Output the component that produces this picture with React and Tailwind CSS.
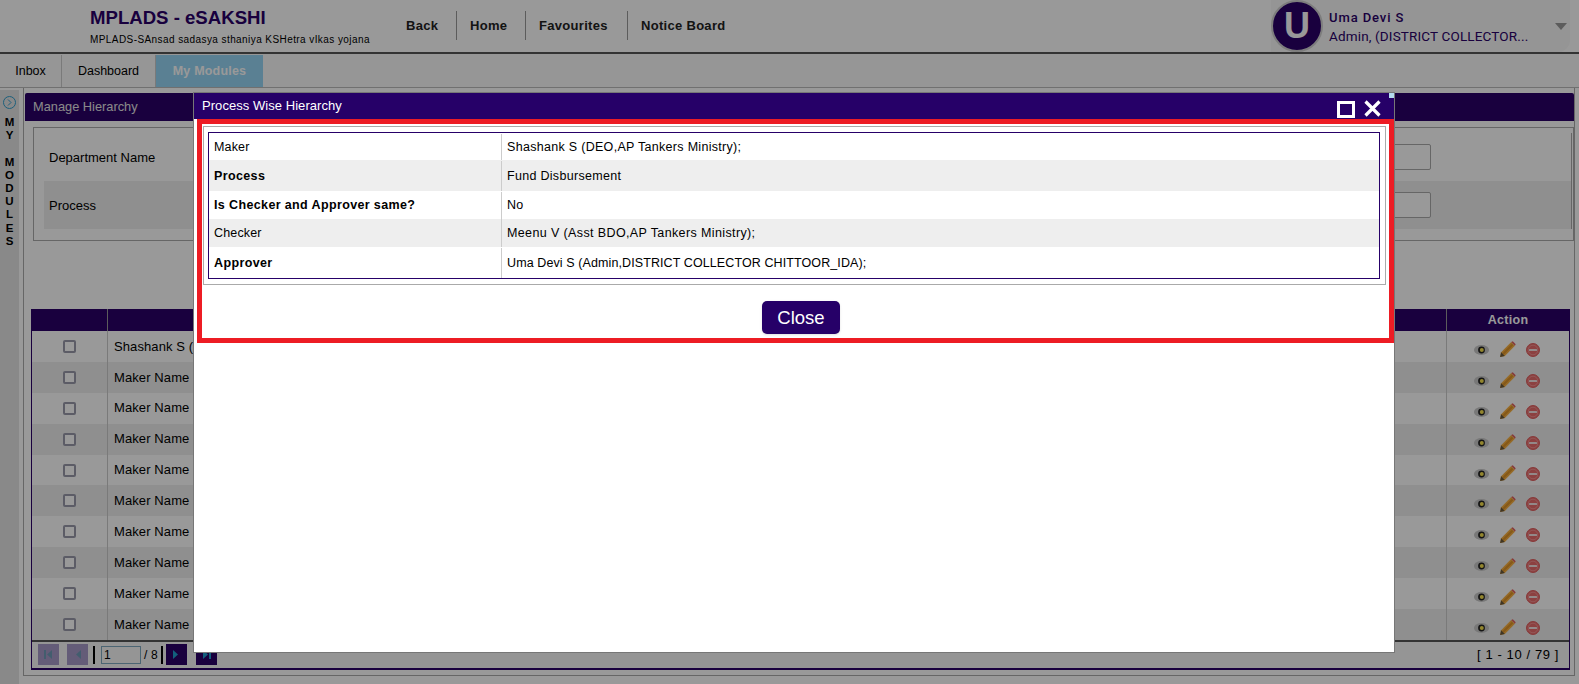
const sans = { fontFamily: '"Liberation Sans", Arial, sans-serif' };

const hierarchy = [
  { label: 'Maker', value: 'Shashank S (DEO,AP Tankers Ministry);', h: 'h-[27px] pt-[1px]', bg: 'bg-white', bold: false, track: 'tracking-[0.3px]' },
  { label: 'Process', value: 'Fund Disbursement', h: 'h-[31px] pt-[1px]', bg: 'bg-[#eeeeee]', bold: true, track: 'tracking-[0.3px]' },
  { label: 'Is Checker and Approver same?', value: 'No', h: 'h-[28px] pt-[1px]', bg: 'bg-white', bold: true, track: 'tracking-[0.3px]' },
  { label: 'Checker', value: 'Meenu V (Asst BDO,AP Tankers Ministry);', h: 'h-[28px]', bg: 'bg-[#eeeeee]', bold: false, track: 'tracking-[0.38px]' },
  { label: 'Approver', value: 'Uma Devi S (Admin,DISTRICT COLLECTOR CHITTOOR_IDA);', h: 'h-[31px] pt-[1px]', bg: 'bg-white', bold: true, track: 'tracking-[0.1px]' },
];

const makers = ['Shashank S (', 'Maker Name', 'Maker Name', 'Maker Name', 'Maker Name', 'Maker Name', 'Maker Name', 'Maker Name', 'Maker Name', 'Maker Name'];

function EyeIcon() {
  return (
    <svg width="15" height="12" viewBox="0 0 15 12">
      <ellipse cx="7.500" cy="6" rx="7.500" ry="5" fill="#c8c8c8" />
      <circle cx="7.500" cy="6" r="3.400" fill="#222" />
      <circle cx="7.800" cy="6" r="2" fill="#f5df4d" />
    </svg>
  );
}

function PencilIcon() {
  return (
    <svg width="17" height="17" viewBox="0 0 16 16">
      <path d="M1 15l1-4.500L11.500 1 15 4.500 5.500 14z" fill="#f8b040" />
      <path d="M3 11.500L12 2.500l1.500 1.500-9 9z" fill="#e09428" />
      <path d="M1 15l1-4.500 3.500 3.500z" fill="#6b5a3d" />
      <path d="M11.500 1L13 .3 15.700 3 15 4.500z" fill="#e06060" />
    </svg>
  );
}

function MinusIcon() {
  return (
    <svg width="14" height="14" viewBox="0 0 14 14">
      <circle cx="7" cy="7" r="6.500" fill="#ea6c6c" stroke="#e06060" />
      <circle cx="7" cy="7" r="4.800" fill="none" stroke="#f8a0a0" strokeWidth="0.700" />
      <rect x="3" y="5.900" width="8" height="2.200" rx="0.500" fill="#f5e5e5" />
    </svg>
  );
}

function PagerBtn({ dim, dir, bar }) {
  return (
    <div className={`w-[21px] h-[21px] flex items-center justify-center ${dim ? 'bg-[#a799c8]' : 'bg-[#2a0068]'}`}>
      <svg width="9" height="11" viewBox="0 0 9 11">
        {bar && dir === 'left' && <rect x="0" y="1" width="2" height="9" fill={dim ? '#6f9cb8' : '#1f9fd0'} />}
        {dir === 'left' ? (
          <path d="M8 1v9L3 5.500z" fill={dim ? '#6f9cb8' : '#1f9fd0'} />
        ) : (
          <path d="M1 1v9l5-4.500z" fill="#1f9fd0" />
        )}
        {bar && dir === 'right' && <rect x="7" y="1" width="2" height="9" fill="#1f9fd0" />}
      </svg>
    </div>
  );
}

function Page() {
  return (
    <div className="h-[684px] w-[1579px] flex flex-col bg-white overflow-hidden" style={sans}>
      {/* top header */}
      <header className="h-[54px] shrink-0 flex border-b-2 border-[#555] bg-white">
        <div className="ml-[90px] w-[316px] pt-[7px]">
          <div className="text-[18.600px] leading-[22px] font-bold text-[#2a0068]">MPLADS - eSAKSHI</div>
          <div className="text-[10px] leading-[12px] mt-[5px] tracking-[0.42px] text-black whitespace-nowrap">MPLADS-SAnsad sadasya sthaniya KSHetra vIkas yojana</div>
        </div>
        <nav className="mt-[11px] h-[29px] flex text-[13px] font-bold text-[#222] tracking-[0.3px]">
          <div className="w-[51px] flex items-center border-r border-[#999]">Back</div>
          <div className="w-[69px] pl-[13px] flex items-center border-r border-[#999]">Home</div>
          <div className="w-[102px] pl-[13px] flex items-center border-r border-[#999] whitespace-nowrap">Favourites</div>
          <div className="pl-[13px] flex items-center whitespace-nowrap">Notice Board</div>
        </nav>
        <div className="ml-auto w-[299px] mr-[9px] h-[52px] flex items-center bg-[#f8f8f8] rounded-br-[12px]">
          <div className="w-[52px] h-[52px] rounded-full bg-[#2a0068] border-2 border-[#d0d0d0] flex items-center justify-center text-white text-[36px] font-bold shrink-0">U</div>
          <div className="ml-[6px] flex-1 min-w-0 text-[#2a0068] pt-[1px]" style={{ fontFamily: 'Roboto, sans-serif' }}>
            <div className="text-[13px] leading-[18px] font-medium tracking-[0.9px]">Uma Devi S</div>
            <div className="text-[13.500px] leading-[18px] tracking-[0.15px] whitespace-nowrap">Admin, (DISTRICT COLLECTOR...</div>
          </div>
          <div className="w-0 h-0 mr-[3px] border-l-[6px] border-r-[6px] border-t-[7px] border-l-transparent border-r-transparent border-t-[#999]" />
        </div>
      </header>

      {/* tabs */}
      <div className="h-[34px] shrink-0 flex border-b border-[#bbb] text-[12.500px] bg-[#fafafa]">
        <div className="w-[62px] mt-[1px] flex items-center justify-center border-r border-[#ccc]">Inbox</div>
        <div className="w-[94px] mt-[1px] flex items-center justify-center border-r border-[#ccc]">Dashboard</div>
        <div className="w-[107px] mt-[1px] flex items-center justify-center font-bold tracking-[0.2px] text-white bg-[#96d5f5]">My Modules</div>
      </div>

      <div className="flex-1 flex min-h-0">
        {/* side strip */}
        <aside className="w-[19px] mt-[2px] shrink-0 bg-[#e4e4e4] flex flex-col items-center text-[11.500px] font-bold leading-[13.200px] text-black">
          <div className="mt-[6px] mb-[7px] w-[13px] h-[13px] rounded-full border border-[#30a0d0] flex items-center justify-center text-[#30a0d0]">
            <svg width="5" height="7" viewBox="0 0 5 7"><path d="M1 .5L4 3.500 1 6.500" fill="none" stroke="currentColor" /></svg>
          </div>
          {['M', 'Y', '\u00a0', 'M', 'O', 'D', 'U', 'L', 'E', 'S'].map((c, i) => <div key={i}>{c}</div>)}
        </aside>

        <main className="flex-1 ml-[4px] mr-[4px] mb-[8px] min-w-0 border-l border-b border-r border-[#aaa] flex flex-col">
          <div className="h-[28px] mt-[5px] ml-[1px] shrink-0 bg-[#2a0068] text-[#e5e5e5] text-[12.800px] leading-[28px] pl-[8px] rounded-t-[2px]">Manage Hierarchy</div>

          {/* filter box */}
          <div className="mt-[6px] ml-[9px] h-[114px] shrink-0 border border-[#aaa] pl-[10px] pr-[1px] pt-[5px] text-[13px] text-black">
            <div className="h-[48px] flex items-center justify-between pl-[5px] pr-[140px] border-r border-[#aaa]">
              <span className="mt-[2px]">Department Name</span>
              <div className="w-[60px] h-[26px] border border-[#aaa] rounded-[2px] bg-white" />
            </div>
            <div className="h-[48px] flex items-center justify-between pl-[5px] pr-[140px] bg-[#eeeeee] border-r border-[#aaa]">
              <span className="mt-[2px]">Process</span>
              <div className="w-[60px] h-[26px] border border-[#aaa] rounded-[2px] bg-white" />
            </div>
          </div>

          {/* table */}
          <div className="mt-[68px] ml-[7px] mr-[4px] border-r border-b-2 border-l border-[#2a0068] flex flex-col text-[13px]">
            <div className="h-[22px] shrink-0 flex bg-[#2a0068] text-white font-bold text-[12.500px]">
              <div className="w-[76px] border-r border-[#999]" />
              <div className="flex-1 border-r border-[#999]" />
              <div className="w-[122px] text-center leading-[22px] tracking-[0.3px]">Action</div>
            </div>
            {makers.map((m, i) => (
              <div key={i} className={`h-[30.900px] shrink-0 flex ${i % 2 === 0 ? 'bg-white' : 'bg-[#eeeeee]'}`}>
                <div className="w-[76px] flex items-center justify-center border-r border-[#ccc]">
                  <div className="w-[13px] h-[13px] rounded-[2px] border-2 border-[#999aaa] bg-white" />
                </div>
                <div className="flex-1 flex items-center pl-[6px] border-r border-[#ccc] tracking-[0.1px]">{m}</div>
                <div className="w-[122px] pt-[7px] pr-[2px] flex items-center justify-center gap-[10px]">
                  <EyeIcon />
                  <PencilIcon />
                  <MinusIcon />
                </div>
              </div>
            ))}
            <div className="h-[28px] shrink-0 flex items-center border-t-2 border-[#555] pl-[6px] pr-[10px] bg-[#f8f8f8]">
              <PagerBtn dim dir="left" bar />
              <div className="ml-[8px]"><PagerBtn dim dir="left" /></div>
              <div className="ml-[5px] w-[2px] h-[18px] bg-black" />
              <div className="ml-[6px] w-[40px] h-[18px] border border-[#7fa8c0] text-[12px] leading-[16px] pl-[2px]">1</div>
              <span className="ml-[3px] text-[12px] tracking-[0.2px]">/ 8</span>
              <div className="ml-[3px] w-[2px] h-[18px] bg-black" />
              <div className="ml-[3px]"><PagerBtn dir="right" /></div>
              <div className="ml-[9px]"><PagerBtn dir="right" bar /></div>
              <span className="ml-auto text-[13px] tracking-[0.6px]">[ 1 - 10 / 79 ]</span>
            </div>
          </div>
        </main>
      </div>
    </div>
  );
}

export default function App() {
  return (
    <div className="relative w-[1579px] h-[684px] overflow-hidden">
      <Page />
      <div className="absolute inset-0 bg-black/40" />

      {/* popup */}
      <div className="absolute left-[193px] top-[92px] w-[1202px] h-[561px] bg-white border border-[#777] flex flex-col" style={sans}>
        <div className="h-[26px] shrink-0 bg-[#260068] relative text-white text-[13px] leading-[25px] pl-[8px] tracking-[0.05px]">
          Process Wise Hierarchy
          <div className="absolute right-[39px] top-[8px] w-[18px] h-[17px] border-[3px] border-white" />
          <svg className="absolute right-[13px] top-[7px]" width="17" height="17" viewBox="0 0 17 17">
            <path d="M1.500 1.500l14 14M15.500 1.500l-14 14" stroke="#fff" strokeWidth="3.200" fill="none" />
          </svg>
          <div className="absolute right-0 top-0 w-[5px] h-[5px] bg-[#b5dcf0]" />
        </div>

        <div className="ml-[3px] w-[1197px] h-[224px] shrink-0 border-[5px] border-[#ed1c24] flex flex-col">
          <div className="mt-[2px] ml-[1px] mr-[3px] h-[159px] shrink-0 border border-[#aaa] pl-[4px] pr-[5px] py-[5px]">
            <div className="border border-[#260068] text-[12.500px] text-black h-[147px]">
              {hierarchy.map((row) => (
                <div key={row.label} className={`flex ${row.h} ${row.bg}`}>
                  <div className={`w-[293px] pl-[5px] flex items-center border-r border-[#ccc] ${row.bold ? 'font-bold tracking-[0.37px]' : 'tracking-[0.15px]'}`}>{row.label}</div>
                  <div className={`flex-1 pl-[5px] flex items-center ${row.track}`}>{row.value}</div>
                </div>
              ))}
            </div>
          </div>
          <div className="flex justify-center mt-[16px] pl-[11px]">
            <button className="w-[78px] h-[33px] rounded-[5px] bg-[#260068] text-white text-[18.500px] shadow-sm">Close</button>
          </div>
        </div>
      </div>
    </div>
  );
}
